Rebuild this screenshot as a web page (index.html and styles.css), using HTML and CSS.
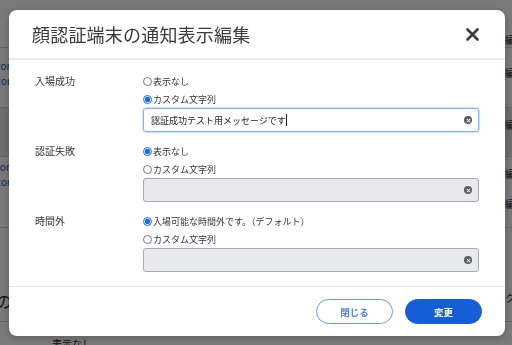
FILE: index.html
```html
<!DOCTYPE html>
<html lang="ja">
  <head>
    <meta charset="UTF-8" />
    <meta name="viewport" content="width=device-width, initial-scale=1.0" />
    <title>顔認証端末の通知表示編集</title>
    <link rel="stylesheet" href="styles.css">
  </head>
  <body>
    <!-- 背景の一覧画面（モーダルの後ろ） -->
    <div class="page">
      <div class="bg-row bg-top"><span></span><span class="bg-edit">編</span></div>
      <div class="bg-row bg-mail">
        <span class="bg-link">a@example.com<br>b@example.com</span>
        <span class="bg-edit">編</span>
      </div>
      <div class="bg-row bg-dark"><span></span><span class="bg-edit">編</span></div>
      <div class="bg-row bg-mail2">
        <span class="bg-link">c@example.com<br>d@example.com</span>
        <span class="bg-edit">編<br>編</span>
      </div>
      <div class="bg-row bg-low">
        <span class="bg-name">の通知</span>
        <span class="bg-edit">ク</span>
      </div>
      <div class="bg-row bg-last"><span class="bg-text">表示なし</span></div>
    </div>

    <div class="overlay">
      <div class="modal">
        <div class="modal-header">
          <h1 class="modal-title">顔認証端末の通知表示編集</h1>
          <button class="close" type="button" aria-label="閉じる">
            <svg width="13" height="13" viewBox="0 0 13 13">
              <path d="M1.5 1.5 L11.5 11.5 M11.5 1.5 L1.5 11.5" stroke="#3d3d3d" stroke-width="2.6" stroke-linecap="round" />
            </svg>
          </button>
        </div>

        <div class="modal-body">
          <div class="field">
            <div class="field-label">入場成功</div>
            <div class="field-options">
              <label class="radio"><input type="radio" name="enter" />表示なし</label>
              <label class="radio"><input type="radio" name="enter" checked />カスタム文字列</label>
              <div class="text-box is-focus">
                <span class="text-value">認証成功テスト用メッセージです</span><span class="caret"></span>
                <span class="clear"></span>
              </div>
            </div>
          </div>

          <div class="field">
            <div class="field-label">認証失敗</div>
            <div class="field-options">
              <label class="radio"><input type="radio" name="fail" checked />表示なし</label>
              <label class="radio"><input type="radio" name="fail" />カスタム文字列</label>
              <div class="text-box is-disabled">
                <span class="text-value"></span>
                <span class="clear"></span>
              </div>
            </div>
          </div>

          <div class="field">
            <div class="field-label">時間外</div>
            <div class="field-options">
              <label class="radio"><input type="radio" name="outside" checked />入場可能な時間外です。（デフォルト）</label>
              <label class="radio"><input type="radio" name="outside" />カスタム文字列</label>
              <div class="text-box is-disabled">
                <span class="text-value"></span>
                <span class="clear"></span>
              </div>
            </div>
          </div>
        </div>

        <div class="modal-footer">
          <button class="btn btn-outline" type="button">閉じる</button>
          <button class="btn btn-primary" type="button">変更</button>
        </div>
      </div>
    </div>
  </body>
</html>
```

FILE: styles.css
```css
html {
  font-family: "Noto Sans CJK JP", "Noto Sans", sans-serif;
  background: #fff;
}
body {
  margin: 0;
  height: 345px;
  overflow: hidden;
}

/* 背景の一覧 */
.page {
  font-size: 10px;
  color: #222;
}
.bg-row {
  display: flex;
  justify-content: space-between;
  border-bottom: 1px solid #cfcfcf;
  box-sizing: border-box;
}
.bg-top {
  height: 48px;
  padding-top: 25px;
}
.bg-mail {
  height: 60px;
  padding-top: 10px;
  align-items: flex-start;
}
.bg-dark {
  height: 49px;
  background: #e4e4e4;
  padding-top: 2px;
}
.bg-mail2 {
  height: 71px;
  padding-top: 2px;
}
.bg-low {
  height: 94px;
  align-items: flex-end;
  padding-bottom: 8px;
}
.bg-last {
  height: 40px;
}
.bg-link {
  color: #1f4fd0;
  line-height: 15px;
  margin-left: -62px;
}
.bg-edit {
  line-height: 30px;
  margin-right: -3px;
}
.bg-name {
  font-size: 16px;
  margin-left: -4px;
}
.bg-text {
  margin: 14px 0 0 52px;
}

/* モーダル */
.overlay {
  position: fixed;
  inset: 0;
  background: rgba(0, 0, 0, 0.52);
}
.modal {
  width: 496px;
  height: 326px;
  margin: 10px 0 0 9px;
  background: #fff;
  border-radius: 8px;
  box-shadow: 0 2px 8px rgba(0, 0, 0, 0.25);
  display: flex;
  flex-direction: column;
}
.modal-header {
  height: 48px;
  display: flex;
  align-items: center;
  justify-content: space-between;
  padding: 0 26px 0 23px;
  border-bottom: 2px solid #ececec;
}
.modal-title {
  margin: 0;
  font-size: 18px;
  font-weight: 400;
  color: #3a3a3a;
  letter-spacing: 0.2px;
}
.close {
  border: 0;
  background: none;
  padding: 0;
  display: flex;
}

.modal-body {
  padding: 12px 26px 14px 26px;
  display: flex;
  flex-direction: column;
  gap: 10px;
  border-bottom: 1px solid #e2e2e2;
}
.field {
  display: grid;
  grid-template-columns: 108px 1fr;
}
.field-label {
  font-size: 10px;
  color: #333;
  line-height: 18px;
}
.field-options {
  display: flex;
  flex-direction: column;
}
.radio {
  display: flex;
  align-items: center;
  height: 18px;
  font-size: 9px;
  color: #333;
}
.radio input {
  width: 9px;
  height: 9px;
  margin: 0 1px 0 0;
  accent-color: #1a6ee8;
}

.text-box {
  height: 24px;
  box-sizing: border-box;
  border: 1px solid #aaa;
  border-radius: 3px;
  display: flex;
  align-items: center;
  padding: 0 6px 0 7px;
  font-size: 9px;
  color: #222;
}
.text-box.is-focus {
  border-color: #86b1f5;
  box-shadow: 0 0 0 1px #d3e3fc;
}
.text-box.is-disabled {
  background: #e8e9ec;
}
.text-value {
  flex: 0 1 auto;
}
.caret {
  width: 1px;
  height: 12px;
  background: #222;
}
.clear {
  margin-left: auto;
  width: 8px;
  height: 8px;
  border-radius: 50%;
  background: #5a5a5a;
  position: relative;
}
.clear::before,
.clear::after {
  content: "";
  position: absolute;
  left: 1.5px;
  top: 3.5px;
  width: 5px;
  height: 1px;
  background: #fff;
  transform: rotate(45deg);
}
.clear::after {
  transform: rotate(-45deg);
}

.modal-footer {
  flex: 1;
  display: flex;
  align-items: center;
  justify-content: flex-end;
  gap: 12px;
  padding: 0 23px 0 0;
}
.btn {
  width: 77px;
  height: 25px;
  border-radius: 13px;
  font-family: inherit;
  font-size: 9.5px;
  font-weight: 700;
  cursor: pointer;
}
.btn-outline {
  background: #fff;
  border: 1px solid #6d97ec;
  color: #4d7fe0;
}
.btn-primary {
  background: #155ed8;
  border: 1px solid #155ed8;
  color: #fff;
}
```
